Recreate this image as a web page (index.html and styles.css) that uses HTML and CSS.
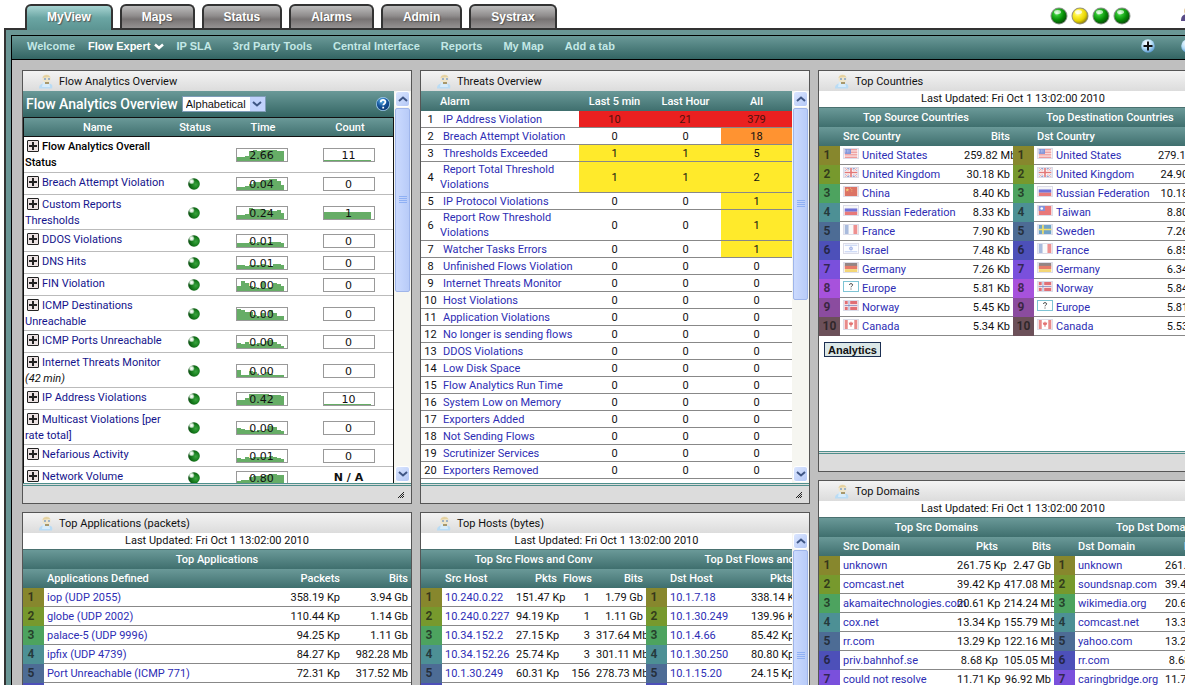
FILE: index.html
```html
<!DOCTYPE html>
<html lang="en">
<head>
    <meta charset="UTF-8">
    <meta name="viewport" content="width=device-width, initial-scale=1" />
    <title>MyView - Flow Expert</title>
    <link rel="stylesheet" href="styles.css">
</head>
<body>
    <!-- shared shapes -->
    <svg class="defs" width="0" height="0" aria-hidden="true">
        <defs>
            <radialGradient id="green" cx="35%" cy="30%" r="75%">
                <stop offset="0" stop-color="#d8ffd8"/><stop offset="0.25" stop-color="#2fc42f"/><stop offset="0.65" stop-color="#058a05"/><stop offset="1" stop-color="#0a4a0a"/>
            </radialGradient>
            <radialGradient id="yellow" cx="35%" cy="30%" r="75%">
                <stop offset="0" stop-color="#ffffdc"/><stop offset="0.3" stop-color="#fff23a"/><stop offset="0.7" stop-color="#e6d400"/><stop offset="1" stop-color="#8a7c10"/>
            </radialGradient>
            <radialGradient id="ball" cx="65%" cy="55%" r="65%">
                <stop offset="0" stop-color="#3aa53f"/><stop offset="0.55" stop-color="#157a1b"/><stop offset="1" stop-color="#0b4d12"/>
            </radialGradient>
            <radialGradient id="shine" cx="50%" cy="50%" r="50%">
                <stop offset="0" stop-color="#ffffff"/><stop offset="0.5" stop-color="#d5ead6"/><stop offset="1" stop-color="#d5ead6" stop-opacity="0"/>
            </radialGradient>
            <radialGradient id="blue" cx="40%" cy="30%" r="80%">
                <stop offset="0" stop-color="#ffffff"/><stop offset="0.5" stop-color="#b4dcf6"/><stop offset="1" stop-color="#3f86c4"/>
            </radialGradient>
            <radialGradient id="navy" cx="40%" cy="25%" r="85%">
                <stop offset="0" stop-color="#5fb4ec"/><stop offset="0.5" stop-color="#15559c"/><stop offset="1" stop-color="#0b2f66"/>
            </radialGradient>
        </defs>
        <symbol id="led-green" viewBox="0 0 18 18">
            <circle cx="9" cy="9" r="8.5" fill="#8a938a"/><circle cx="9" cy="9" r="7.5" fill="url(#green)"/>
            <ellipse cx="7.5" cy="5" rx="3.5" ry="2" fill="#fff" opacity="0.65"/>
        </symbol>
        <symbol id="led-yellow" viewBox="0 0 18 18">
            <circle cx="9" cy="9" r="8.5" fill="#96937c"/><circle cx="9" cy="9" r="7.5" fill="url(#yellow)"/>
            <ellipse cx="7.5" cy="5" rx="3.5" ry="2" fill="#fff" opacity="0.7"/>
        </symbol>
        <symbol id="status-ball" viewBox="0 0 12 12">
            <circle cx="6" cy="6" r="5.8" fill="url(#ball)"/>
            <circle cx="3.6" cy="3.4" r="3.2" fill="url(#shine)"/>
        </symbol>
        <symbol id="person" viewBox="0 0 16 16">
            <path d="M1 15.500C1 12 3 11 5 10.500L11 10.500C14 11 15 12.500 14 15.500Z" fill="#b9dcf5"/>
            <path d="M5 9L11 9L12 14L4 14Z" fill="#d8ecfa"/>
            <circle cx="8.500" cy="5.500" r="4" fill="#efe6cb"/>
            <path d="M4.500 5C5 1.500 11 0.500 12.500 4.500L11 4L6 4.500Z" fill="#e4d1a0"/>
            <rect x="6" y="5" width="2" height="2" fill="#9fb3c8"/><rect x="10" y="5" width="2" height="2" fill="#9fb3c8"/>
            <path d="M7 9h4v2h-4z" fill="#a8986c"/>
        </symbol>
        <symbol id="up" viewBox="0 0 10 6"><path d="M1 5L5 1.500L9 5" fill="none" stroke="#3f5685" stroke-width="2"/></symbol>
        <symbol id="down" viewBox="0 0 10 6"><path d="M1 1L5 4.500L9 1" fill="none" stroke="#3f5685" stroke-width="2"/></symbol>
        <symbol id="grip" viewBox="0 0 8 8"><path d="M0 .5h8M0 2.500h8M0 4.500h8M0 6.500h8" stroke="#8fb0f4"/></symbol>
        <symbol id="resize" viewBox="0 0 7 6"><path d="M1 6L7 0M3 6L7 2M5 6L7 4" stroke="#222"/></symbol>
        <symbol id="flag-us" viewBox="0 0 16 11"><rect width="16" height="11" fill="#fff"/><path d="M0 .5h16M0 2.500h16M0 4.500h16M0 6.500h16M0 8.500h16M0 10.500h16" stroke="#e87878"/><rect width="8" height="6" fill="#7f93d8"/><path d="M1 1.500h6M1 3.500h6" stroke="#dfe6ff" stroke-dasharray="1 1"/></symbol>
        <symbol id="flag-gb" viewBox="0 0 16 11"><rect width="16" height="11" fill="#98a4cf"/><path d="M0 0L16 11M16 0L0 11" stroke="#fff" stroke-width="2.500"/><path d="M0 0L16 11M16 0L0 11" stroke="#e79292" stroke-width="1"/><path d="M8 0v11M0 5.500h16" stroke="#fff" stroke-width="4"/><path d="M8 0v11M0 5.500h16" stroke="#e27878" stroke-width="2"/></symbol>
        <symbol id="flag-cn" viewBox="0 0 16 11"><rect width="16" height="11" fill="#dc7365"/><path d="M3.500 1.500l.7 1.400h1.500l-1.200 1 .5 1.600-1.500-1-1.500 1 .5-1.600-1.200-1h1.500z" fill="#f6d27a"/><path d="M7 1.500h1M8.500 3h1M8.500 5h1" stroke="#f6d27a"/></symbol>
        <symbol id="flag-ru" viewBox="0 0 16 11"><rect width="16" height="4" fill="#f5f5f8"/><rect y="3" width="16" height="4" fill="#7273d8"/><rect y="7" width="16" height="4" fill="#e87979"/></symbol>
        <symbol id="flag-fr" viewBox="0 0 16 11"><rect width="16" height="11" fill="#fafafa"/><rect width="5" height="11" fill="#a9bbdd"/><rect x="11" width="5" height="11" fill="#ee9090"/></symbol>
        <symbol id="flag-il" viewBox="0 0 16 11"><rect width="16" height="11" fill="#fbfcff"/><path d="M0 1.500h16M0 9.500h16" stroke="#b2c4ef"/><path d="M8 3l2 3.500h-4zM8 8l-2-3.500h4z" fill="none" stroke="#8fa4e4" stroke-width=".7"/></symbol>
        <symbol id="flag-de" viewBox="0 0 16 11"><rect width="16" height="4" fill="#938585"/><rect y="3.500" width="16" height="4" fill="#e57b6b"/><rect y="7.500" width="16" height="3.500" fill="#f3d676"/></symbol>
        <symbol id="flag-eu" viewBox="0 0 16 11"><rect width="16" height="11" fill="#fff"/><path d="M6 3.500c0-2 4-2 4 0 0 1.500-2 1.500-2 3M8 8v1.200" fill="none" stroke="#444" stroke-width="1.200"/></symbol>
        <symbol id="flag-no" viewBox="0 0 16 11"><rect width="16" height="11" fill="#e06f76"/><path d="M5.500 0v11M0 5.500h16" stroke="#fff" stroke-width="3"/><path d="M5.500 0v11M0 5.500h16" stroke="#8288bd"/></symbol>
        <symbol id="flag-tw" viewBox="0 0 16 11"><rect width="16" height="11" fill="#e8787a"/><rect width="8" height="6" fill="#8492dc"/><circle cx="4" cy="3" r="1.600" fill="#fff"/></symbol>
        <symbol id="flag-se" viewBox="0 0 16 11"><rect width="16" height="11" fill="#6fa2c8"/><path d="M5.500 0v11M0 5.500h16" stroke="#f2e06a" stroke-width="2"/></symbol>
        <symbol id="flag-ca" viewBox="0 0 16 11"><rect width="16" height="11" fill="#fff"/><rect width="4" height="11" fill="#e88a8a"/><rect x="12" width="4" height="11" fill="#e88a8a"/><path d="M8 1.500l1 2 1.800-.4-.6 2.400-1.700 1.300v1.700h-1v-1.700l-1.700-1.300-.6-2.400 1.800.4z" fill="#e37474"/></symbol>
    </svg>

    <div class="page">
        <header>
            <nav class="tabs">
                <a class="tab active" href="#">MyView</a>
                <a class="tab" href="#">Maps</a>
                <a class="tab" href="#">Status</a>
                <a class="tab" href="#">Alarms</a>
                <a class="tab" href="#">Admin</a>
                <a class="tab" href="#">Systrax</a>
            </nav>
            <div class="leds">
                <svg width="18" height="18"><use href="#led-green"/></svg>
                <svg width="18" height="18"><use href="#led-yellow"/></svg>
                <svg width="18" height="18"><use href="#led-green"/></svg>
                <svg width="18" height="18"><use href="#led-green"/></svg>
            </div>
            <svg class="user" width="16" height="16" viewBox="0 0 16 16"><circle cx="8" cy="5" r="5" fill="#e4c79c"/><path d="M0 15C0 9 3 8 8 8S16 9 16 15Z" fill="#584a86"/></svg>
        </header>

        <div class="frame">
            <nav class="subnav">
                <a href="#">Welcome</a>
                <a class="current" href="#">Flow Expert
                    <svg width="10" height="7" viewBox="0 0 10 7"><path d="M1 1.500L5 5L9 1.500" fill="none" stroke="#fff" stroke-width="2.500"/></svg>
                </a>
                <a class="after-current" href="#">IP SLA</a>
                <a href="#">3rd Party Tools</a>
                <a href="#">Central Interface</a>
                <a href="#">Reports</a>
                <a href="#">My Map</a>
                <a href="#">Add a tab</a>
                <div class="tools">
                    <button class="round" aria-label="Add">
                        <svg width="14" height="14" viewBox="0 0 14 14"><circle cx="7" cy="7" r="6.800" fill="url(#blue)"/><path d="M7 2.500v9M2.500 7h9" stroke="#111" stroke-width="2"/></svg>
                    </button>
                    <button class="round" aria-label="Settings">
                        <svg width="14" height="14" viewBox="0 0 14 14"><circle cx="7" cy="7" r="6.800" fill="url(#blue)"/><circle cx="8" cy="7" r="3" fill="#2a6fb4"/></svg>
                    </button>
                </div>
            </nav>

            <main class="board">
                <div class="column">
                    <section class="panel">
                        <h2><svg width="16" height="16"><use href="#person"/></svg>Flow Analytics Overview</h2>
                        <div class="body tall">
                            <div class="content">
                                <div class="toolbar">
                                    <label for="order">Flow Analytics Overview</label>
                                    <span class="select">
                                        <select id="order"><option>Alphabetical</option><option>Severity</option></select>
                                        <span class="arrow"><svg width="10" height="6"><use href="#down"/></svg></span>
                                    </span>
                                    <button class="round help" aria-label="Help">
                                        <svg width="14" height="14" viewBox="0 0 14 14"><circle cx="7" cy="7" r="7" fill="#9fcbee"/><circle cx="7" cy="7" r="6.200" fill="url(#navy)"/><path d="M4.800 5.200c0-3 4.600-3 4.600-.2 0 1.700-2.200 1.600-2.200 3.300M7.200 9.800v1.700" fill="none" stroke="#fff" stroke-width="1.800"/></svg>
                                    </button>
                                </div>
                                <table class="analytics">
                                    <colgroup><col class="c-name"><col class="c-status"><col class="c-time"><col></colgroup>
                                    <thead><tr><th>Name</th><th>Status</th><th>Time</th><th>Count</th></tr></thead>
                                    <tbody id="analytics"></tbody>
                                </table>
                            </div>
                            <div class="scroll">
                                <button aria-label="Scroll up"><svg width="10" height="6"><use href="#up"/></svg></button>
                                <div class="thumb"><svg width="8" height="8"><use href="#grip"/></svg></div>
                                <div class="track"></div>
                                <button aria-label="Scroll down"><svg width="10" height="6"><use href="#down"/></svg></button>
                            </div>
                        </div>
                        <footer><svg width="7" height="6"><use href="#resize"/></svg></footer>
                    </section>

                    <section class="panel">
                        <h2><svg width="16" height="16"><use href="#person"/></svg>Top Applications (packets)</h2>
                        <div class="body">
                            <div class="content">
                                <p class="updated">Last Updated: Fri Oct 1 13:02:00 2010</p>
                                <div class="pair" id="applications"></div>
                            </div>
                        </div>
                    </section>
                </div>

                <div class="column">
                    <section class="panel">
                        <h2><svg width="16" height="16"><use href="#person"/></svg>Threats Overview</h2>
                        <div class="body tall">
                            <div class="content">
                                <table class="threats">
                                    <colgroup><col class="c-no"><col class="c-alarm"><col class="c-num"><col class="c-num"><col></colgroup>
                                    <thead><tr><th></th><th class="left">Alarm</th><th>Last 5 min</th><th>Last Hour</th><th>All</th></tr></thead>
                                    <tbody id="threats"></tbody>
                                </table>
                            </div>
                            <div class="scroll">
                                <button aria-label="Scroll up"><svg width="10" height="6"><use href="#up"/></svg></button>
                                <div class="thumb tall-thumb"><svg width="8" height="8"><use href="#grip"/></svg></div>
                                <div class="track"></div>
                                <button aria-label="Scroll down"><svg width="10" height="6"><use href="#down"/></svg></button>
                            </div>
                        </div>
                        <footer><svg width="7" height="6"><use href="#resize"/></svg></footer>
                    </section>

                    <section class="panel">
                        <h2><svg width="16" height="16"><use href="#person"/></svg>Top Hosts (bytes)</h2>
                        <div class="body medium">
                            <div class="content">
                                <p class="updated">Last Updated: Fri Oct 1 13:02:00 2010</p>
                                <div class="pair hosts" id="hosts"></div>
                            </div>
                            <div class="scroll">
                                <button aria-label="Scroll up"><svg width="10" height="6"><use href="#up"/></svg></button>
                                <div class="thumb long"><svg width="8" height="8"><use href="#grip"/></svg></div>
                                <div class="track"></div>
                                <button aria-label="Scroll down"><svg width="10" height="6"><use href="#down"/></svg></button>
                            </div>
                        </div>
                    </section>
                </div>

                <div class="column">
                    <section class="panel">
                        <h2><svg width="16" height="16"><use href="#person"/></svg>Top Countries</h2>
                        <div class="body medium">
                            <div class="content">
                                <p class="updated">Last Updated: Fri Oct 1 13:02:00 2010</p>
                                <div class="pair countries" id="countries"></div>
                                <button class="analytics-btn">Analytics</button>
                            </div>
                        </div>
                        <footer><svg width="7" height="6"><use href="#resize"/></svg></footer>
                    </section>

                    <section class="panel">
                        <h2><svg width="16" height="16"><use href="#person"/></svg>Top Domains</h2>
                        <div class="body">
                            <div class="content">
                                <p class="updated">Last Updated: Fri Oct 1 13:02:00 2010</p>
                                <div class="pair domains" id="domains"></div>
                            </div>
                        </div>
                    </section>
                </div>
            </main>
        </div>
    </div>
    <script src="script.js"></script>
</body>
</html>
```
FILE: styles.css
```css
* {
    box-sizing: border-box;
}

body {
    margin: 0;
    height: 100vh;
    overflow: hidden;
    background-color: #fff;
    color: #111;
    font-family: Roboto, 'Noto Sans', sans-serif;
    font-size: 11px;
}

svg {
    flex: none;
}

.defs {
    position: absolute;
}

button {
    font-family: inherit;
    cursor: pointer;
}

a {
    color: #2d2db4;
    text-decoration: none;
}

.page {
    min-width: 1225px;
}

/* top tabs */
header {
    display: flex;
    align-items: center;
    height: 28px;
    padding: 0 28px 0 25px;
}

.tabs {
    display: flex;
    gap: 7px;
    align-self: flex-end;
    font-family: 'Liberation Sans', Arial, sans-serif;
    font-size: 12px;
    font-weight: bold;
}

.tab {
    height: 24px;
    line-height: 22px;
    padding: 0 20px;
    color: #fff;
    border: 2px solid #333;
    border-bottom: none;
    border-radius: 6px 6px 0 0;
    background: linear-gradient(#bdbdbd, #8f8c8c 45%, #777373 60%, #959292);
    text-shadow: 1px 1px 1px #555;
}

.tab.active {
    height: 26px;
    margin-bottom: -2px;
    background: linear-gradient(#a8d4d2, #6aa5a3 50%, #5c9492);
    position: relative;
}

.leds {
    display: flex;
    gap: 3px;
    margin: 4px 50px 0 auto;
}

.frame {
    margin: 0 0 0 4px;
    border: 2px solid #333;
    border-bottom: none;
    background-color: #6a9695;
    padding: 5px 5px 0;
}

.subnav {
    display: flex;
    align-items: center;
    gap: 21px;
    height: 25px;
    padding: 0 22px 4px 15px;
    border: 1px solid #000;
    background: linear-gradient(#6a9998, #336563);
    font-family: 'Liberation Sans', Arial, sans-serif;
    font-size: 11px;
    font-weight: bold;
}

.subnav a {
    color: #c3e8e6;
}

.subnav .current {
    color: #fff;
    margin-left: -8px;
}

.subnav .after-current {
    margin-left: -8px;
}

.tools {
    display: flex;
    gap: 26px;
    margin-left: auto;
}

.round {
    display: flex;
    padding: 0;
    border: none;
    background: none;
}

/* dashboard */
.board {
    display: grid;
    grid-template-columns: repeat(3, 1fr);
    gap: 8px;
    padding: 10px;
    border-left: 1px solid #000;
    background-color: #bfbfbf;
}

.column {
    display: flex;
    flex-direction: column;
    gap: 8px;
    min-width: 0;
}

.panel {
    border: 1px solid #555;
    background-color: #fff;
}

.panel h2 {
    display: flex;
    align-items: center;
    gap: 5px;
    height: 20px;
    margin: 0;
    padding-left: 15px;
    font-size: 11px;
    font-weight: normal;
    background: linear-gradient(#f3f3f3, #dcdcdc);
}

.body {
    display: flex;
}

.body.tall {
    height: 392px;
}

.body.medium {
    height: 360px;
}

.content {
    flex: 1;
    min-width: 0;
    overflow: hidden;
}

.panel footer {
    display: flex;
    justify-content: flex-end;
    align-items: center;
    height: 20px;
    padding-right: 7px;
    border-top: 3px double #4f8f8c;
    background-color: #dcdcdc;
}

table {
    width: 100%;
    border-spacing: 0;
    table-layout: fixed;
}

th, td {
    padding: 0;
}

th {
    color: #fff;
    font-weight: 500;
}

thead tr {
    background: linear-gradient(#6a9998, #3f6f6e);
}

th.left {
    text-align: left;
}

/* scroll bars */
.scroll {
    display: flex;
    flex-direction: column;
    gap: 1px;
    width: 17px;
    padding: 0 1px 1px;
    background-color: #f6f6f1;
}

.scroll button {
    display: flex;
    align-items: center;
    justify-content: center;
    height: 16px;
    padding: 0;
    border: 1px solid #fff;
    border-radius: 3px;
    background: linear-gradient(135deg, #dbe6ff, #b4c8f6);
}

.thumb {
    display: flex;
    align-items: center;
    justify-content: center;
    height: 184px;
    border: 1px solid #9fb5ea;
    border-radius: 2px;
    background: linear-gradient(90deg, #cbdafe, #b8cbf8);
}

.thumb.tall-thumb {
    height: 192px;
}

.thumb.long {
    height: 212px;
}

.track {
    flex: 1;
}

/* flow analytics */
.toolbar {
    display: flex;
    align-items: center;
    height: 26px;
    padding: 0 4px 0 3px;
    background: linear-gradient(#6a9998, #336563);
    color: #fff;
    font-size: 14px;
    font-weight: 500;
}

.select {
    position: relative;
    display: flex;
    margin-left: 4px;
}

.select select {
    appearance: none;
    width: 84px;
    height: 16px;
    padding: 0 16px 0 3px;
    border: 1px solid #7f9db9;
    border-radius: 0;
    background-color: #fff;
    color: #111;
    font-family: 'Liberation Sans', Arial, sans-serif;
    font-size: 11px;
}

.select .arrow {
    position: absolute;
    top: 1px;
    right: 1px;
    display: flex;
    align-items: center;
    justify-content: center;
    width: 15px;
    height: 14px;
    background-color: #c1d2fc;
    pointer-events: none;
}

.help {
    margin-left: auto;
}

.analytics {
    border: 1px solid #111;
    border-bottom: none;
}

.c-name {
    width: 147px;
}

.c-status {
    width: 48px;
}

.c-time {
    width: 88px;
}

.analytics th {
    height: 19px;
    border-bottom: 1px solid #111;
}

.analytics td {
    padding: 1px 0 0 1px;
    height: 22px;
    line-height: 16px;
    border-bottom: 1px solid #bbb;
    vertical-align: top;
}

.analytics td + td {
    padding-right: 4px;
    vertical-align: middle;
}

.analytics tr:first-child td {
    height: 36px;
}

.analytics a {
    color: #14148c;
}

.analytics .total {
    color: #000;
    font-weight: 500;
}

.plus {
    width: 12px;
    height: 12px;
    margin: 2px 3px 0 2px;
    padding: 0;
    border: 1px solid #222;
    border-radius: 1px;
    background: linear-gradient(#222, #222) center / 8px 2px no-repeat, linear-gradient(#222, #222) center / 2px 8px no-repeat, #ebe2e2;
    vertical-align: -1px;
}

.ball {
    display: block;
    margin: auto;
}

.spark {
    display: grid;
    width: 52px;
    height: 14px;
    margin: 0 auto;
    border: 1px solid #999;
}

.spark svg, .spark span {
    grid-area: 1 / 1;
}

.spark span {
    font-family: 'DejaVu Sans', sans-serif;
    line-height: 14px;
    text-align: center;
}

.na {
    font-family: 'DejaVu Sans', sans-serif;
    font-weight: bold;
    text-align: center;
}

/* threats */
.c-no {
    width: 19px;
}

.c-alarm {
    width: 139px;
}

.c-num {
    width: 71px;
}

.threats th {
    height: 20px;
}

.threats td {
    height: 17px;
    line-height: 15px;
    border-bottom: 1px solid #888;
    text-align: center;
}

.threats td:nth-child(2) {
    text-align: left;
}

.threats a {
    margin-left: 3px;
}

.threats .red {
    background-color: #ea2020;
    color: #50110c;
}

.threats .orange {
    background-color: #ff9331;
}

.threats .yellow {
    background-color: #ffea2b;
}

/* ranked lists */
.updated {
    height: 16px;
    line-height: 16px;
    margin: 0;
    text-align: center;
}

.pair {
    display: flex;
    border-top: 1px solid #4a7170;
}

.pair th {
    height: 19px;
    text-align: right;
    padding: 0 3px;
}

.pair .caption th {
    text-align: center;
}

.pair th.name {
    text-align: left;
    padding-left: 3px;
}

.pair td {
    height: 19px;
    border-bottom: 1px solid #888;
    padding: 0 3px;
    text-align: right;
    white-space: nowrap;
}

.pair td.name {
    padding: 0 0 0 3px;
    text-align: left;
}

.pair td:last-child {
    overflow: hidden;
}

.pair .rank {
    width: 21px;
    padding: 0 5px 2px 0;
    border: none;
    font-size: 12px;
    font-weight: bold;
    text-align: center;
    color: rgba(20, 20, 20, 0.7);
}

.pair .rank.wide {
    padding: 0 0 2px;
}

.r1 { background-color: #87872d; }
.r2 { background-color: #77992d; }
.r3 { background-color: #4da35f; }
.r4 { background-color: #4d9095; }
.r5 { background-color: #4d6c95; }
.r6 { background-color: #4d50b9; }
.r7 { background-color: #7a50dc; }
.r8 { background-color: #a752dc; }
.r9 { background-color: #8b4c9f; }
.r10 { background-color: #6c5059; }

.w-packets { width: 80px; }
.w-bits { width: 68px; }
.w-kp { width: 47px; }
.w-flows { width: 33px; }
.w-mb { width: 53px; }
.w-country { width: 52px; }

.hosts table {
    flex: none;
    width: 225px;
}

.hosts table + table {
    width: 235px;
}

.hosts th {
    overflow: hidden;
    white-space: nowrap;
}

.domains table {
    flex: none;
    width: 235px;
}

.domains table + table {
    width: 208px;
}

.flag {
    margin-right: 3px;
    vertical-align: 0;
    border: 1px solid #dcdce8;
}

.flag.unknown {
    border-color: #7fc4d4;
}

.analytics-btn {
    display: block;
    height: 15px;
    margin: 6px 5px;
    padding: 0 3px;
    border: 1px solid #1c2f52;
    background-color: #dbe7e7;
    color: #111;
    font-family: 'Liberation Sans', Arial, sans-serif;
    font-size: 11px;
    font-weight: bold;
    line-height: 12px;
}
```
FILE: script.js
```js
// name, time, time history, count, count level, note
const analytics = [
    ['Flow Analytics Overall Status', '2.66', [4, 4, 5, 10, 11, 10, 11, 11, 11, 11, 10, 10], '11', 1],
    ['Breach Attempt Violation', '0.04', [3, 3, 4, 6, 8, 8, 9, 10, 11, 11, 9, 5], '0', 0],
    ['Custom Reports Thresholds', '0.24', [4, 4, 5, 11, 10, 10, 10, 9, 8, 8, 9, 6], '1', 7],
    ['DDOS Violations', '0.01', [4, 4, 4, 5, 4, 5, 4, 4, 5, 5, 5, 4], '0', 0],
    ['DNS Hits', '0.01', [4, 4, 3, 4, 4, 4, 5, 4, 3, 5, 5, 4], '0', 0],
    ['FIN Violation', '0.00', [5, 10, 8, 5, 4, 3, 9, 3, 4, 8, 7, 5], '0', 0],
    ['ICMP Destinations Unreachable', '0.00', [11, 10, 8, 8, 5, 4, 7, 4, 10, 7, 4, 4], '0', 0],
    ['ICMP Ports Unreachable', '0.00', [5, 4, 6, 4, 4, 5, 4, 7, 8, 6, 4, 2], '0', 0],
    ['Internet Threats Monitor', '0.00', [7, 2, 2, 6, 5, 2, 2, 5, 3, 2, 2, 2], '0', 0, '(42 min)'],
    ['IP Address Violations', '0.42', [5, 5, 7, 11, 11, 11, 11, 11, 10, 10, 10, 9], '10', 1],
    ['Multicast Violations [per rate total]', '0.00', [6, 5, 4, 4, 3, 4, 3, 5, 8, 7, 4, 3], '0', 0],
    ['Nefarious Activity', '0.01', [4, 3, 5, 4, 5, 5, 5, 5, 6, 5, 4, 3], '0', 0],
    ['Network Volume', '0.80', [3, 4, 4, 7, 8, 8, 8, 9, 10, 10, 9, 9], 'N / A', 0]
];

const threats = [
    ['IP Address Violation', 10, 21, 379],
    ['Breach Attempt Violation', 0, 0, 18],
    ['Thresholds Exceeded', 1, 1, 5],
    ['Report Total Threshold Violations', 1, 1, 2],
    ['IP Protocol Violations', 0, 0, 1],
    ['Report Row Threshold Violations', 0, 0, 1],
    ['Watcher Tasks Errors', 0, 0, 1],
    ['Unfinished Flows Violation', 0, 0, 0],
    ['Internet Threats Monitor', 0, 0, 0],
    ['Host Violations', 0, 0, 0],
    ['Application Violations', 0, 0, 0],
    ['No longer is sending flows', 0, 0, 0],
    ['DDOS Violations', 0, 0, 0],
    ['Low Disk Space', 0, 0, 0],
    ['Flow Analytics Run Time', 0, 0, 0],
    ['System Low on Memory', 0, 0, 0],
    ['Exporters Added', 0, 0, 0],
    ['Not Sending Flows', 0, 0, 0],
    ['Scrutinizer Services', 0, 0, 0],
    ['Exporters Removed', 0, 0, 0]
];

function spark(text, bars) {
    const rects = bars.map((h, i) => `<rect x="${i * 4}" y="${12 - h}" width="${i === 11 ? 3 : 4}" height="${h}" fill="#66ad66"/>`).join('');
    return `<div class="spark"><svg width="50" height="12">${rects}</svg><span>${text}</span></div>`;
}

document.getElementById('analytics').innerHTML = analytics.map(([name, time, history, count, level, note], i) => `
    <tr>
        <td><button class="plus" aria-label="Expand"></button><a class="${i === 0 ? 'total' : ''}" href="#">${name}</a>${note ? `<br><i>${note}</i>` : ''}</td>
        <td>${i === 0 ? '' : '<svg class="ball" width="12" height="12"><use href="#status-ball"/></svg>'}</td>
        <td>${spark(time, history)}</td>
        <td>${count === 'N / A' ? `<div class="na">${count}</div>` : spark(count, Array(12).fill(level))}</td>
    </tr>`).join('');

function severity(n) {
    if (n > 20 || n === 10) return 'red';
    if (n > 10) return 'orange';
    return n > 0 ? 'yellow' : '';
}

document.getElementById('threats').innerHTML = threats.map(([name, ...counts], i) => `
    <tr>
        <td>${i + 1}</td>
        <td><a href="#">${name}</a></td>
        ${counts.map(n => `<td class="${severity(n)}">${n}</td>`).join('')}
    </tr>`).join('');

// one ranked table: columns are [label, width class], rows start with the name
function ranked(title, columns, rows) {
    const cols = columns.map(c => `<col class="${c[1]}">`).join('');
    const heads = columns.map((c, i) => `<th class="${i === 0 ? 'name' : ''}">${c[0]}</th>`).join('');
    const body = rows.map(([name, ...values], i) => `
        <tr>
            <td class="rank r${i + 1}${i === 9 ? ' wide' : ''}">${i + 1}</td>
            <td class="name">${name}</td>
            ${values.map(v => `<td>${v}</td>`).join('')}
        </tr>`).join('');
    return `<table><colgroup><col class="rank">${cols}</colgroup>
        <thead><tr class="caption"><th colspan="${columns.length + 1}">${title}</th></tr><tr><th></th>${heads}</tr></thead>
        <tbody>${body}</tbody></table>`;
}

const link = rows => rows.map(([name, ...rest]) => [`<a href="#">${name}</a>`, ...rest]);
const flags = rows => rows.map(([code, name, bits]) => [
    `<svg class="flag${code === 'eu' ? ' unknown' : ''}" width="16" height="11" viewBox="0 0 16 11"><use href="#flag-${code}"/></svg><a href="#">${name}</a>`, bits
]);

document.getElementById('applications').innerHTML = ranked('Top Applications',
    [['Applications Defined', ''], ['Packets', 'w-packets'], ['Bits', 'w-bits']], link([
        ['iop (UDP 2055)', '358.19 Kp', '3.94 Gb'],
        ['globe (UDP 2002)', '110.44 Kp', '1.14 Gb'],
        ['palace-5 (UDP 9996)', '94.25 Kp', '1.11 Gb'],
        ['ipfix (UDP 4739)', '84.27 Kp', '982.28 Mb'],
        ['Port Unreachable (ICMP 771)', '72.31 Kp', '317.52 Mb'],
        ['', '', '']
    ]));

const hostCols = side => [[side + ' Host', ''], ['Pkts', 'w-kp'], ['Flows', 'w-flows'], ['Bits', 'w-mb']];
document.getElementById('hosts').innerHTML =
    ranked('Top Src Flows and Conv', hostCols('Src'), link([
        ['10.240.0.22', '151.47 Kp', '1', '1.79 Gb'],
        ['10.240.0.227', '94.19 Kp', '1', '1.11 Gb'],
        ['10.34.152.2', '27.15 Kp', '3', '317.64 Mb'],
        ['10.34.152.26', '25.74 Kp', '3', '301.11 Mb'],
        ['10.1.30.249', '60.31 Kp', '156', '278.73 Mb'],
        ['', '', '', '']
    ])) +
    ranked('Top Dst Flows and Conv', hostCols('Dst'), link([
        ['10.1.7.18', '338.14 Kp', '', ''],
        ['10.1.30.249', '139.96 Kp', '', ''],
        ['10.1.4.66', '85.42 Kp', '', ''],
        ['10.1.30.250', '80.80 Kp', '', ''],
        ['10.1.15.20', '24.15 Kp', '', ''],
        ['', '', '', '']
    ]));

document.getElementById('countries').innerHTML =
    ranked('Top Source Countries', [['Src Country', ''], ['Bits', 'w-country']], flags([
        ['us', 'United States', '259.82 Mb'],
        ['gb', 'United Kingdom', '30.18 Kb'],
        ['cn', 'China', '8.40 Kb'],
        ['ru', 'Russian Federation', '8.33 Kb'],
        ['fr', 'France', '7.90 Kb'],
        ['il', 'Israel', '7.48 Kb'],
        ['de', 'Germany', '7.26 Kb'],
        ['eu', 'Europe', '5.81 Kb'],
        ['no', 'Norway', '5.45 Kb'],
        ['ca', 'Canada', '5.34 Kb']
    ])) +
    ranked('Top Destination Countries', [['Dst Country', ''], ['Bits', 'w-country']], flags([
        ['us', 'United States', '279.1 Mb'],
        ['gb', 'United Kingdom', '24.90 Kb'],
        ['ru', 'Russian Federation', '10.18 Kb'],
        ['tw', 'Taiwan', '8.80 Kb'],
        ['se', 'Sweden', '7.26 Kb'],
        ['fr', 'France', '6.85 Kb'],
        ['de', 'Germany', '6.34 Kb'],
        ['no', 'Norway', '5.84 Kb'],
        ['eu', 'Europe', '5.81 Kb'],
        ['ca', 'Canada', '5.53 Kb']
    ]));

const domainCols = side => [[side + ' Domain', ''], ['Pkts', 'w-kp'], ['Bits', 'w-mb']];
document.getElementById('domains').innerHTML =
    ranked('Top Src Domains', domainCols('Src'), link([
        ['unknown', '261.75 Kp', '2.47 Gb'],
        ['comcast.net', '39.42 Kp', '417.08 Mb'],
        ['akamaitechnologies.com', '20.61 Kp', '214.24 Mb'],
        ['cox.net', '13.34 Kp', '155.79 Mb'],
        ['rr.com', '13.29 Kp', '122.16 Mb'],
        ['priv.bahnhof.se', '8.68 Kp', '105.05 Mb'],
        ['could not resolve', '11.71 Kp', '96.92 Mb']
    ])) +
    ranked('Top Dst Domains', domainCols('Dst'), link([
        ['unknown', '261.75 Kp', ''],
        ['soundsnap.com', '39.42 Kp', ''],
        ['wikimedia.org', '20.61 Kp', ''],
        ['comcast.net', '13.34 Kp', ''],
        ['yahoo.com', '13.29 Kp', ''],
        ['rr.com', '8.68 Kp', ''],
        ['caringbridge.org', '11.71 Kp', '']
    ]));
```
